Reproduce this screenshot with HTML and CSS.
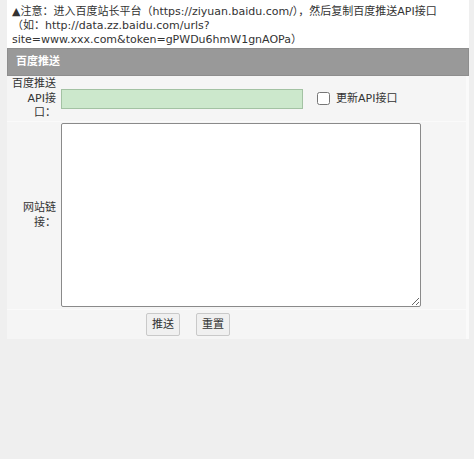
FILE: index.html
```html
<!DOCTYPE html>
<html lang="zh-CN">
<head>
<meta charset="utf-8">
<title>百度推送</title>
<link rel="stylesheet" href="styles.css">
</head>
<body>
<div class="wrap">
  <div class="notice">▲注意：进入百度站长平台（https://ziyuan.baidu.com/），然后复制百度推送API接口（如：http://data.zz.baidu.com/urls?site=www.xxx.com&amp;token=gPWDu6hmW1gnAOPa）</div>
  <div class="header">百度推送</div>
  <div class="form">
    <div class="row row-api">
      <label class="lbl" for="api">百度推送API接口：</label>
      <div class="field">
        <input class="api" id="api" type="text">
        <label class="chk"><input class="chk-box" type="checkbox">更新API接口</label>
      </div>
    </div>
    <div class="row row-urls">
      <label class="lbl" for="urls">网站链接：</label>
      <div class="field">
        <textarea class="urls" id="urls"></textarea>
      </div>
    </div>
    <div class="row row-btns">
      <div class="lbl"></div>
      <div class="field btns">
        <button class="btn" type="button">推送</button>
        <button class="btn" type="button">重置</button>
      </div>
    </div>
  </div>
</div>
</body>
</html>
```

FILE: styles.css
```css
body {
  margin: 0;
  background: #efefef;
  color: #333;
  font-family: "DejaVu Sans", "Noto Sans CJK SC", sans-serif;
  font-size: 11px;
  line-height: 14px;
}

.wrap {
  margin-left: 7px;
  width: 462px;
  background: #fff;
}

.notice {
  padding: 5px 10px 1px 5px;
}

.header {
  box-sizing: border-box;
  height: 28px;
  line-height: 26px;
  padding-left: 8px;
  background: #999;
  border: 1px solid #8e8e8e;
  color: #fff;
  font-weight: bold;
}

.form {
  display: flex;
  flex-direction: column;
  gap: 1px;
  padding-right: 3px;
  background: #fafafa;
}

.row {
  display: flex;
  background: #f5f5f5;
}

.lbl {
  flex: none;
  width: 48px;
  margin: 0 5px 0 1px;
  align-self: center;
  text-align: right;
  line-height: 14.5px;
}

.row-api {
  min-height: 45px;
}

.row-api .lbl {
  padding-top: 1px;
}

.field {
  display: flex;
  align-items: center;
  flex: 1;
}

.api {
  box-sizing: border-box;
  width: 242px;
  height: 20px;
  margin: 0;
  padding: 0 3px;
  background: #cce8cc;
  border: 1px solid #a3c2a3;
  font: inherit;
}

.chk {
  display: flex;
  align-items: center;
  cursor: pointer;
}

.chk-box {
  width: 13px;
  height: 13px;
  margin: 0 6px 0 14px;
}

.row-urls .field {
  padding: 1px 0 2px;
}

.urls {
  box-sizing: border-box;
  width: 360px;
  height: 184px;
  margin: 0;
  background: #fff;
  border: 1px solid #8a8a8a;
  border-radius: 2px;
  font: inherit;
}

.btns {
  padding: 3px 0;
  gap: 16px;
}

.btn {
  box-sizing: border-box;
  height: 23px;
  margin: 0;
  padding: 0 5px;
  background: #f0f0f0;
  border: 1px solid #c9c9c9;
  border-radius: 2px;
  color: #333;
  font: inherit;
}

.btns .btn:first-child {
  margin-left: 85px;
}
```
